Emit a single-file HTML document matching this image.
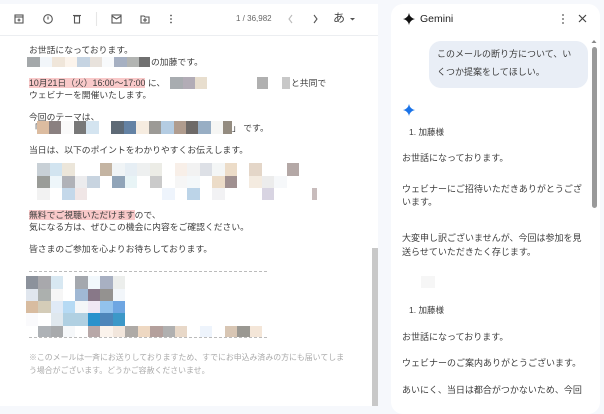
<!DOCTYPE html>
<html><head><meta charset="utf-8"><style>
*{margin:0;padding:0;box-sizing:border-box}
body{width:604px;height:406px;overflow:hidden;background:#f6f8fc;position:relative;font-family:"Liberation Sans","Noto Sans CJK JP",sans-serif;color:#333}
.l{position:absolute;white-space:nowrap;font-size:8.8px;line-height:12px;color:#3c3c3c}
.r{position:absolute;white-space:nowrap;font-size:9px;line-height:12px;color:#3c3c3c}
.hl{background:#f9c9c9}
svg{position:absolute}
</style></head><body>
<div style="position:absolute;left:0;top:4px;width:378px;height:402px;background:#fff"></div>
<div style="position:absolute;left:0;top:35px;width:378px;height:1px;background:#eceef1"></div>
<svg style="left:0;top:0" width="378" height="36" fill="none" stroke="#555" stroke-width="1.1">
<rect x="15" y="15" width="8" height="8"/><line x1="15" y1="17" x2="23" y2="17"/><line x1="19" y1="18.5" x2="19" y2="21.5"/><line x1="17.5" y1="20" x2="20.5" y2="20"/>
<circle cx="48" cy="19" r="4.3"/><line x1="48" y1="16.5" x2="48" y2="19.5"/>
<rect x="74.5" y="16" width="5" height="7"/><line x1="73" y1="15.5" x2="81" y2="15.5"/>
<line x1="96.5" y1="12" x2="96.5" y2="26" stroke="#e6e6e6"/>
<rect x="112" y="15" width="9" height="8"/><path d="M112 16l4.5 3 4.5-3"/>
<path d="M141 16h3l1 1h4v6h-8z"/><line x1="145" y1="18" x2="145" y2="22"/><line x1="143" y1="20" x2="147" y2="20"/>
<g fill="#555" stroke="none"><circle cx="171" cy="15.5" r=".9"/><circle cx="171" cy="19" r=".9"/><circle cx="171" cy="22.5" r=".9"/></g>
<path d="M292 15l-3 4 3 4" stroke="#bbb"/><path d="M314 15l3 4-3 4"/>
<path d="M350 18l2.5 2.5 2.5-2.5z" fill="#555" stroke="none"/>
</svg>
<div class="l" style="left:236px;top:13px;font-size:8px;color:#666">1 / 36,982</div>
<div class="l" style="left:333px;top:12px;font-size:12px;color:#444">あ</div>

<div class="l" style="left:29px;top:44px">お世話になっております。</div>
<div class="l" style="left:151px;top:56px">の加藤です。</div>
<div class="l" style="left:29px;top:77px"><span class="hl">10月21日（火）16:00～17:00</span> に、</div>
<div class="l" style="left:291px;top:77px">と共同で</div>
<div class="l" style="left:29px;top:89px">ウェビナーを開催いたします。</div>
<div class="l" style="left:29px;top:111px">今回のテーマは、</div>
<div class="l" style="left:30px;top:122px">「</div>
<div class="l" style="left:232px;top:122px">」 です。</div>
<div class="l" style="left:29px;top:144px">当日は、以下のポイントをわかりやすくお伝えします。</div>
<div class="l" style="left:29px;top:209px"><span class="hl">無料でご視聴いただけます</span>ので、</div>
<div class="l" style="left:29px;top:221px">気になる方は、ぜひこの機会に内容をご確認ください。</div>
<div class="l" style="left:29px;top:243px">皆さまのご参加を心よりお待ちしております。</div>
<div style="position:absolute;left:29px;top:271px;width:238px;border-top:1px dashed #bbb"></div>
<div style="position:absolute;left:29px;top:337px;width:238px;border-top:1px dashed #bbb"></div>
<div class="l" style="left:29px;top:352px;font-size:7.9px;color:#aaa">※このメールは一斉にお送りしておりますため、すでにお申込み済みの方にも届いてしま</div>
<div class="l" style="left:29px;top:365px;font-size:7.9px;color:#aaa">う場合がございます。どうかご容赦くださいませ。</div>

<svg style="left:0;top:0" width="378" height="406">
<g>
<rect x="27" y="57" width="13" height="10" fill="#a4a8aa"/><rect x="40" y="57" width="12" height="10" fill="#f2f6fa"/><rect x="52" y="57" width="13" height="10" fill="#f0e6da"/><rect x="65" y="57" width="12" height="10" fill="#fcf4ec"/><rect x="77" y="57" width="13" height="10" fill="#c6d4e2"/><rect x="90" y="57" width="12" height="10" fill="#e8e2dc"/><rect x="102" y="57" width="12" height="10" fill="#f8fafc"/><rect x="114" y="57" width="13" height="10" fill="#a6b0c2"/><rect x="127" y="57" width="12" height="10" fill="#b2b4b2"/><rect x="139" y="57" width="11" height="10" fill="#707070"/>
<rect x="170" y="77" width="13" height="12" fill="#a8acb0"/><rect x="183" y="77" width="12" height="12" fill="#b2acb6"/><rect x="195" y="77" width="12" height="12" fill="#e8dece"/><rect x="257" y="77" width="11" height="12" fill="#b0b0b0"/><rect x="282" y="77" width="8" height="12" fill="#c8c8c8"/>
<rect x="37" y="121" width="12" height="13" fill="#dcbca0"/><rect x="49" y="121" width="12" height="13" fill="#8a8080"/><rect x="61" y="121" width="12" height="13" fill="#fafafa"/><rect x="74" y="121" width="12" height="13" fill="#787878"/><rect x="86" y="121" width="13" height="13" fill="#d4e4f0"/><rect x="99" y="121" width="12" height="13" fill="#fff"/><rect x="111" y="121" width="13" height="13" fill="#5e6a76"/><rect x="124" y="121" width="12" height="13" fill="#6482a4"/><rect x="136" y="121" width="13" height="13" fill="#f6ece0"/><rect x="149" y="121" width="12" height="13" fill="#9c9a96"/><rect x="161" y="121" width="13" height="13" fill="#b4cce2"/><rect x="174" y="121" width="12" height="13" fill="#b09c8e"/><rect x="186" y="121" width="12" height="13" fill="#6e6a68"/><rect x="198" y="121" width="13" height="13" fill="#98aec4"/><rect x="211" y="121" width="12" height="13" fill="#f6f6f4"/><rect x="223" y="121" width="9" height="13" fill="#948c80"/>
</g>
<g>
<rect x="37" y="163" width="13" height="13" fill="#c8d0d6"/><rect x="50" y="163" width="12" height="13" fill="#d2e4f0"/><rect x="62" y="163" width="13" height="13" fill="#ece6da"/><rect x="100" y="163" width="12" height="13" fill="#c4b4a2"/><rect x="112" y="163" width="13" height="13" fill="#f0f4f6"/><rect x="125" y="163" width="12" height="13" fill="#e6eef4"/><rect x="137" y="163" width="13" height="13" fill="#eef0f0"/><rect x="150" y="163" width="12" height="13" fill="#ecece6"/><rect x="175" y="163" width="12" height="13" fill="#f8efe8"/><rect x="187" y="163" width="13" height="13" fill="#f2f2f2"/><rect x="200" y="163" width="12" height="13" fill="#dde0e6"/><rect x="212" y="163" width="13" height="13" fill="#f4f6f6"/><rect x="225" y="163" width="12" height="13" fill="#ecdcc8"/><rect x="249" y="163" width="13" height="13" fill="#e4d6c8"/><rect x="287" y="163" width="12" height="13" fill="#b4a8a6"/>
<rect x="37" y="176" width="13" height="12" fill="#9a9c98"/><rect x="50" y="176" width="12" height="12" fill="#eef6fa"/><rect x="62" y="176" width="13" height="12" fill="#b0b2b8"/><rect x="75" y="176" width="12" height="12" fill="#ececee"/><rect x="87" y="176" width="13" height="12" fill="#c8d4e0"/><rect x="112" y="176" width="13" height="12" fill="#90a4b8"/><rect x="125" y="176" width="12" height="12" fill="#e8f4f6"/><rect x="150" y="176" width="12" height="12" fill="#cacaca"/><rect x="175" y="176" width="12" height="12" fill="#f6f6f6"/><rect x="187" y="176" width="13" height="12" fill="#f4f8fa"/><rect x="212" y="176" width="13" height="12" fill="#ecdcc8"/><rect x="225" y="176" width="12" height="12" fill="#a09090"/><rect x="249" y="176" width="13" height="12" fill="#f4ebe0"/><rect x="262" y="176" width="12" height="12" fill="#ececec"/><rect x="274" y="176" width="13" height="12" fill="#f6f8fa"/>
<rect x="37" y="188" width="13" height="12" fill="#f2f2f2"/><rect x="62" y="188" width="13" height="12" fill="#c4d8ea"/><rect x="75" y="188" width="12" height="12" fill="#f0e6e6"/><rect x="162" y="188" width="13" height="12" fill="#eef4fc"/><rect x="187" y="188" width="13" height="12" fill="#bcd4e8"/><rect x="212" y="188" width="13" height="12" fill="#f2f2f4"/><rect x="262" y="188" width="12" height="12" fill="#d8d4e2"/><rect x="312" y="188" width="5" height="12" fill="#c8bcbc"/>
</g>
<g>
<rect x="26" y="276" width="12" height="13" fill="#8c929c"/><rect x="38" y="276" width="13" height="13" fill="#a8a8ac"/><rect x="51" y="276" width="12" height="13" fill="#d8e8f2"/><rect x="75" y="276" width="13" height="13" fill="#a4a8ae"/><rect x="88" y="276" width="12" height="13" fill="#f2f8fc"/><rect x="100" y="276" width="13" height="13" fill="#a8b0c2"/><rect x="113" y="276" width="12" height="13" fill="#eceeec"/>
<rect x="26" y="289" width="12" height="12" fill="#e0e6ee"/><rect x="38" y="289" width="13" height="12" fill="#acb0ae"/><rect x="51" y="289" width="12" height="12" fill="#f6f6f6"/><rect x="75" y="289" width="13" height="12" fill="#a0b8d4"/><rect x="88" y="289" width="12" height="12" fill="#887888"/><rect x="100" y="289" width="13" height="12" fill="#949290"/><rect x="113" y="289" width="12" height="12" fill="#f2f6fa"/>
<rect x="26" y="301" width="12" height="12" fill="#d8bca0"/><rect x="38" y="301" width="13" height="12" fill="#d4ccb8"/><rect x="51" y="301" width="12" height="12" fill="#e0eaf6"/><rect x="63" y="301" width="12" height="12" fill="#b6daf4"/><rect x="75" y="301" width="13" height="12" fill="#f4f6f8"/><rect x="88" y="301" width="12" height="12" fill="#f0e8f4"/><rect x="100" y="301" width="13" height="12" fill="#92c2ec"/><rect x="113" y="301" width="12" height="12" fill="#6ea6e2"/>
<rect x="26" y="313" width="12" height="13" fill="#fafafc"/><rect x="51" y="313" width="12" height="13" fill="#e0e8ee"/><rect x="63" y="313" width="25" height="13" fill="#b0d0e2"/><rect x="88" y="313" width="12" height="13" fill="#2a92cc"/><rect x="100" y="313" width="13" height="13" fill="#4e86ba"/><rect x="113" y="313" width="12" height="13" fill="#3c98c8"/>
<rect x="38" y="326" width="13" height="11" fill="#aeb2b6"/><rect x="51" y="326" width="12" height="11" fill="#a8aaac"/><rect x="63" y="326" width="12" height="11" fill="#f6f8fa"/><rect x="88" y="326" width="12" height="11" fill="#b8a8a8"/><rect x="100" y="326" width="13" height="11" fill="#fbf3ec"/><rect x="113" y="326" width="12" height="11" fill="#f2e6dc"/><rect x="125" y="326" width="13" height="11" fill="#aeaaa6"/><rect x="138" y="326" width="12" height="11" fill="#eed8c2"/><rect x="150" y="326" width="13" height="11" fill="#b4a09c"/><rect x="163" y="326" width="12" height="11" fill="#b0b0b0"/><rect x="175" y="326" width="12" height="11" fill="#e8d8c8"/><rect x="200" y="326" width="12" height="11" fill="#eef4fc"/><rect x="225" y="326" width="12" height="11" fill="#d8c6b4"/><rect x="237" y="326" width="13" height="11" fill="#9a9892"/><rect x="250" y="326" width="12" height="11" fill="#f4e6d8"/>
</g>
<rect x="372" y="248" width="6" height="158" fill="#c8c8c8"/>
</svg>

<div style="position:absolute;left:391px;top:4px;width:209px;height:410px;background:#fff;border-radius:12px"></div>
<svg style="left:391px;top:4px" width="213" height="402">
<path d="M18 9q1 5 6 6q-5 1-6 6q-1-5-6-6q5-1 6-6z" fill="#111"/>
<g fill="#555"><circle cx="172" cy="11" r=".9"/><circle cx="172" cy="15" r=".9"/><circle cx="172" cy="19" r=".9"/></g>
<path d="M188 11l7 7M195 11l-7 7" stroke="#444" stroke-width="1.2"/>
<path d="M18 100q1 5 6 6q-5 1-6 6q-1-5-6-6q5-1 6-6z" fill="#1a73e8"/>
<path d="M203 36l2.5 3h-5z" fill="#888"/>
<rect x="201" y="43" width="5" height="161" rx="2.5" fill="#9a9a9a"/>
<rect x="30" y="272" width="14" height="12" fill="#f6f6f6"/>
</svg>
<div class="r" style="left:420px;top:13px;font-size:10.5px;color:#222">Gemini</div>
<div style="position:absolute;left:429px;top:41px;width:159px;height:47px;background:#e9eef6;border-radius:12px"></div>
<div class="r" style="left:437px;top:48px">このメールの断り方について、い</div>
<div class="r" style="left:437px;top:66px">くつか提案をしてほしい。</div>
<div class="r" style="left:409px;top:126px;font-size:8.5px">1. 加藤様</div>
<div class="r" style="left:402px;top:152px">お世話になっております。</div>
<div class="r" style="left:402px;top:183px">ウェビナーにご招待いただきありがとうござ</div>
<div class="r" style="left:402px;top:196px">います。</div>
<div class="r" style="left:402px;top:232px">大変申し訳ございませんが、今回は参加を見</div>
<div class="r" style="left:402px;top:246px">送らせていただきたく存じます。</div>
<div class="r" style="left:409px;top:304px;font-size:8.5px">1. 加藤様</div>
<div class="r" style="left:402px;top:331px">お世話になっております。</div>
<div class="r" style="left:402px;top:357px">ウェビナーのご案内ありがとうございます。</div>
<div class="r" style="left:402px;top:384px">あいにく、当日は都合がつかないため、今回</div>
</body></html>
